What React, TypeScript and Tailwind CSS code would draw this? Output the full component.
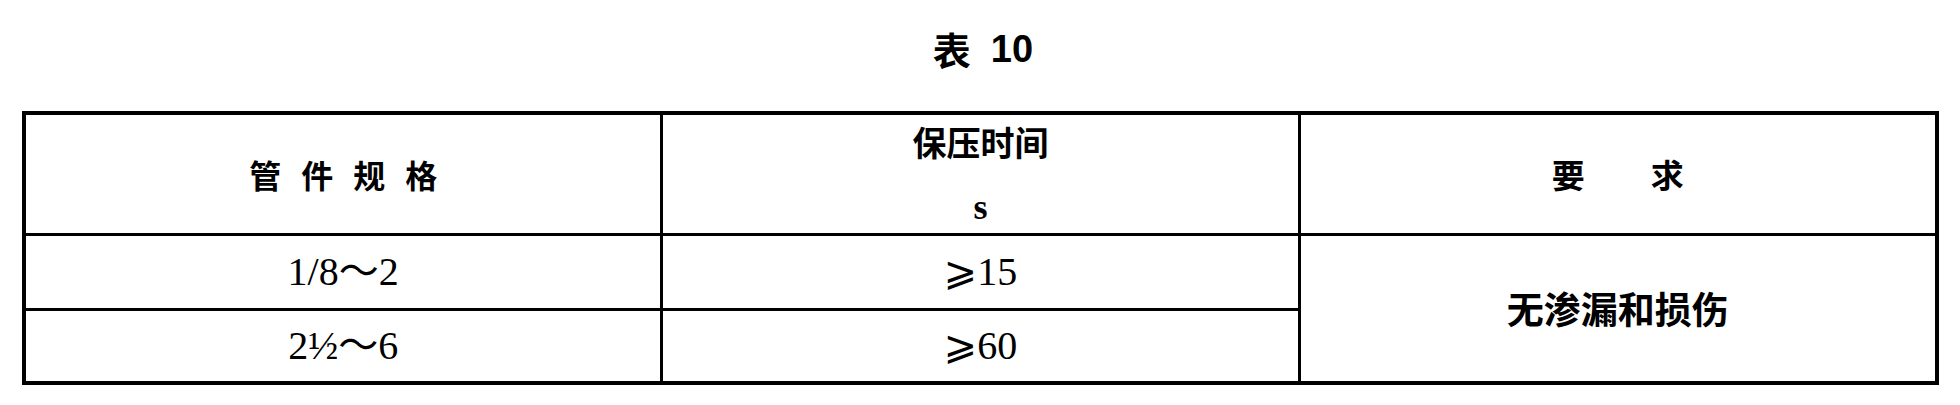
import React from "react";

const serif = { fontFamily: '"Liberation Serif", "DejaVu Serif", "DejaVu Sans", "Noto Sans CJK SC", serif' };

export default function App() {
  return (
    <div className="w-[1960px] h-[405px] bg-white text-black overflow-hidden">
      <div className="h-[111px] pt-[30px] flex justify-center">
        <div className="flex items-start text-[38px] leading-[38px] font-bold ml-[6px]">
          <span className="font-['Noto_Sans_CJK_SC',sans-serif]">表</span>
          <span className="ml-[20px] font-['Liberation_Sans',Arial,sans-serif]">10</span>
        </div>
      </div>
      <div className="ml-[22px] w-[1917px] h-[274px] border-4 border-black bg-black grid grid-cols-3 grid-rows-[118px_72px_70px] gap-[3px]">
        <div className="bg-white flex items-center justify-center">
          <span className="font-['Noto_Sans_CJK_SC',sans-serif] font-bold text-[32px] leading-[32px] tracking-[20px] mr-[-20px]">管件规格</span>
        </div>
        <div className="bg-white flex flex-col items-center pt-[10px]">
          <span className="font-['Noto_Sans_CJK_SC',sans-serif] font-semibold text-[34px] leading-[34px]">保压时间</span>
          <span className="mt-[30px] font-['Liberation_Serif',serif] font-bold text-[36px] leading-[36px]">s</span>
        </div>
        <div className="bg-white flex items-center justify-center">
          <span className="font-['Noto_Sans_CJK_SC',sans-serif] font-bold text-[33px] leading-[33px] whitespace-pre">要{"\u3000\u3000"}求</span>
        </div>
        <div className="bg-white flex items-center justify-center">
          <span style={serif} className="text-[40px] leading-[40px]">1/8～2</span>
        </div>
        <div className="bg-white flex items-center justify-center">
          <span style={serif} className="text-[40px] leading-[40px]">⩾15</span>
        </div>
        <div className="bg-white row-span-2 flex items-center justify-center">
          <span className="font-['Noto_Sans_CJK_SC',sans-serif] font-bold text-[37px] leading-[37px]">无渗漏和损伤</span>
        </div>
        <div className="bg-white flex items-center justify-center">
          <span style={serif} className="text-[40px] leading-[40px]">2½～6</span>
        </div>
        <div className="bg-white flex items-center justify-center">
          <span style={serif} className="text-[40px] leading-[40px]">⩾60</span>
        </div>
      </div>
    </div>
  );
}
